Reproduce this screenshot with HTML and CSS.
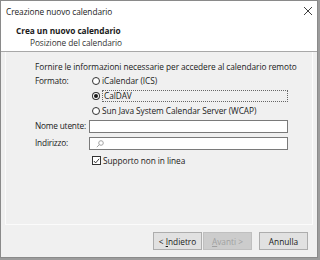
FILE: index.html
```html
<!DOCTYPE html>
<html lang="it">
<head>
    <meta charset="UTF-8">
    <title>Creazione nuovo calendario</title>
    <link rel="stylesheet" href="styles.css">
</head>
<body>
    <div class="window">
        <div class="titlebar">
            <span class="title">Creazione nuovo calendario</span>
            <svg class="close" width="10" height="10" viewBox="0 0 10 10">
                <path d="M1 1 L9 9 M9 1 L1 9" stroke="#404040" stroke-width="1" fill="none"/>
            </svg>
        </div>

        <div class="header">
            <div class="header-title">Crea un nuovo calendario</div>
            <div class="header-sub">Posizione del calendario</div>
        </div>

        <div class="content">
            <div class="panel">
                <p class="intro">Fornire le informazioni necessarie per accedere al calendario remoto</p>

                <div class="form">
                    <span class="label">Formato:</span>
                    <div class="radios">
                        <label class="radio"><span class="dot"></span>iCalendar (ICS)</label>
                        <label class="radio checked"><span class="dot"></span><span class="focus">CalDAV</span></label>
                        <label class="radio"><span class="dot"></span>Sun Java System Calendar Server (WCAP)</label>
                    </div>

                    <span class="label">Nome utente:</span>
                    <div class="field"></div>

                    <span class="label">Indirizzo:</span>
                    <div class="field">
                        <svg class="search" width="8" height="8" viewBox="0 0 8 8">
                            <circle cx="5" cy="3" r="2.3" stroke="#9a9a9a" stroke-width="0.9" fill="none"/>
                            <path d="M3.3 4.7 L0.8 7.2" stroke="#9a9a9a" stroke-width="0.9"/>
                        </svg>
                    </div>

                    <span></span>
                    <label class="check">
                        <span class="box">
                            <svg width="8" height="8" viewBox="0 0 8 8">
                                <path d="M1 4 L3 6.2 L7 1.5" stroke="#222" stroke-width="1" fill="none"/>
                            </svg>
                        </span>
                        Supporto non in linea
                    </label>
                </div>
            </div>

            <div class="footer">
                <button class="btn btn-back">&lt; <u>I</u>ndietro</button>
                <button class="btn btn-next" disabled><u>A</u>vanti &gt;</button>
                <button class="btn btn-cancel">Annulla</button>
            </div>
        </div>
    </div>
</body>
</html>
```

FILE: styles.css
```css
* {
    margin: 0;
    padding: 0;
    box-sizing: border-box;
}

body {
    font-family: 'Open Sans', 'Noto Sans', sans-serif;
    font-size: 8.3px;
    letter-spacing: -0.06px;
    color: #1a1a1a;
    background: #9c9c9c;
    width: 320px;
    height: 260px;
    overflow: hidden;
}

.window {
    width: 318px;
    height: 258px;
    border: 1px solid #8a8a8a;
    background: #f0f0f0;
    display: flex;
    flex-direction: column;
}

/* Title bar */
.titlebar {
    height: 20px;
    background: #fff;
    display: flex;
    align-items: center;
    justify-content: space-between;
    padding: 0 4px 0 5px;
}

.title {
    color: #222;
}

/* Wizard header */
.header {
    height: 31px;
    background: #fff;
    border-bottom: 1px solid #a8a8a8;
    padding: 4px 0 0 15px;
}

.header-title {
    font-weight: 700;
    line-height: 12px;
}

.header-sub {
    line-height: 12px;
    padding-left: 14px;
    color: #333;
}

/* Main area */
.content {
    flex: 1;
    display: flex;
    flex-direction: column;
    padding: 0 4px;
}

.panel {
    height: 173px;
    border: 1px solid #fbfbfb;
    border-top: none;
    padding: 9px 0 0 29px;
}

.intro {
    line-height: 12px;
}

.form {
    display: grid;
    grid-template-columns: 54px 199px;
    align-items: center;
}

.label {
    align-self: start;
    line-height: 15px;
    white-space: nowrap;
    letter-spacing: -0.2px;
}

.radios {
    display: flex;
    flex-direction: column;
}

.radio {
    height: 15px;
    display: flex;
    align-items: center;
    padding-left: 3px;
    white-space: nowrap;
}

.dot {
    width: 8px;
    height: 8px;
    border: 1px solid #333;
    border-radius: 50%;
    margin-right: 2px;
    display: flex;
    align-items: center;
    justify-content: center;
    background: #fff;
}

.radio.checked .dot::after {
    content: '';
    width: 4px;
    height: 4px;
    border-radius: 50%;
    background: #1a1a1a;
}

.focus {
    width: 187px;
    line-height: 10px;
    border: 1px dotted #666;
    padding-left: 1px;
}

.field {
    height: 13px;
    border: 1px solid #7a7a7a;
    background: #fff;
    margin-top: 2px;
    margin-bottom: 2px;
    display: flex;
    align-items: center;
    padding-left: 6px;
}

.check {
    height: 11px;
    margin-top: 3px;
    display: flex;
    align-items: center;
    padding-left: 3px;
}

.box {
    width: 9px;
    height: 9px;
    border: 1px solid #333;
    background: #fff;
    margin-right: 2px;
    display: flex;
    align-items: center;
    justify-content: center;
}

/* Buttons */
.footer {
    flex: 1;
    display: flex;
    justify-content: flex-end;
    align-items: flex-start;
    padding: 7px 5px 0 0;
}

.btn {
    font-family: inherit;
    font-size: 8.3px;
    width: 49px;
    height: 18px;
    background: #e1e1e1;
    border: 1px solid #adadad;
    color: #1a1a1a;
}

.btn u {
    text-underline-offset: 1px;
}

.btn-next {
    margin-left: 1px;
    margin-right: 7px;
    background: #cccccc;
    border-color: #bfbfbf;
    color: #a0a0a0;
}
```
